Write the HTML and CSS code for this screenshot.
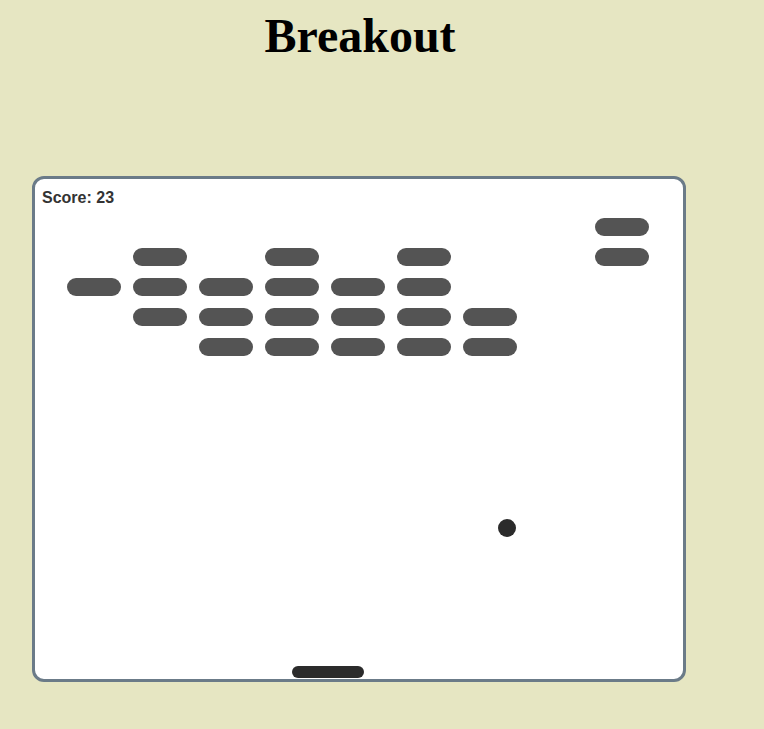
FILE: index.html
```html
<!DOCTYPE html>
<html lang="en">
  <head>
    <meta charset="UTF-8" />
    <meta name="viewport" content="width=device-width, initial-scale=1.0" />
    <title>Breakout</title>
    <link rel="stylesheet" href="styles.css">
  </head>
  <body>
    <div class="page">
      <h1 class="game-title">Breakout</h1>

      <div class="board">
        <div class="score">Score: 23</div>

        <div class="bricks">
          <!-- row 1 -->
          <span></span><span></span><span></span><span></span><span></span>
          <span></span><span></span><span></span><span class="brick"></span>
          <!-- row 2 -->
          <span></span><span class="brick"></span><span></span><span class="brick"></span><span></span>
          <span class="brick"></span><span></span><span></span><span class="brick"></span>
          <!-- row 3 -->
          <span class="brick"></span><span class="brick"></span><span class="brick"></span><span class="brick"></span><span class="brick"></span>
          <span class="brick"></span><span></span><span></span><span></span>
          <!-- row 4 -->
          <span></span><span class="brick"></span><span class="brick"></span><span class="brick"></span><span class="brick"></span>
          <span class="brick"></span><span class="brick"></span><span></span><span></span>
          <!-- row 5 -->
          <span></span><span></span><span class="brick"></span><span class="brick"></span><span class="brick"></span>
          <span class="brick"></span><span class="brick"></span><span></span><span></span>
        </div>

        <div class="ball"></div>
        <div class="paddle"></div>
      </div>
    </div>
  </body>
</html>
```

FILE: styles.css
```css
:root {
  --bg: #e6e6c2;
  --border: #6b7b88;
  --brick: #545454;
  --dark: #2b2b2b;
}

* {
  box-sizing: border-box;
  margin: 0;
  padding: 0;
}

body {
  background: var(--bg);
  font-family: "Liberation Serif", "Times New Roman", serif;
}

.page {
  width: 720px;
  padding-top: 8px;
}

.game-title {
  text-align: center;
  font-size: 48px;
  line-height: 55px;
  font-weight: 700;
  color: #000;
}

.board {
  position: relative;
  width: 654px;
  height: 506px;
  margin: 113px 0 0 32px;
  background: white;
  border: 3px solid var(--border);
  border-radius: 12px;
}

.score {
  padding: 10px 0 0 7px;
  font-family: "Liberation Sans", Arial, sans-serif;
  font-size: 16px;
  font-weight: 700;
  line-height: 18px;
  color: #333;
}

.bricks {
  display: grid;
  grid-template-columns: repeat(9, 54px);
  grid-auto-rows: 18px;
  column-gap: 12px;
  row-gap: 12px;
  margin: 11px 0 0 32px;
}

.brick {
  background: var(--brick);
  border-radius: 9px;
}

.ball {
  position: absolute;
  left: 463px;
  top: 340px;
  width: 18px;
  height: 18px;
  border-radius: 50%;
  background: var(--dark);
}

.paddle {
  position: absolute;
  left: 257px;
  top: 487px;
  width: 72px;
  height: 12px;
  border-radius: 6px;
  background: var(--dark);
}
```
